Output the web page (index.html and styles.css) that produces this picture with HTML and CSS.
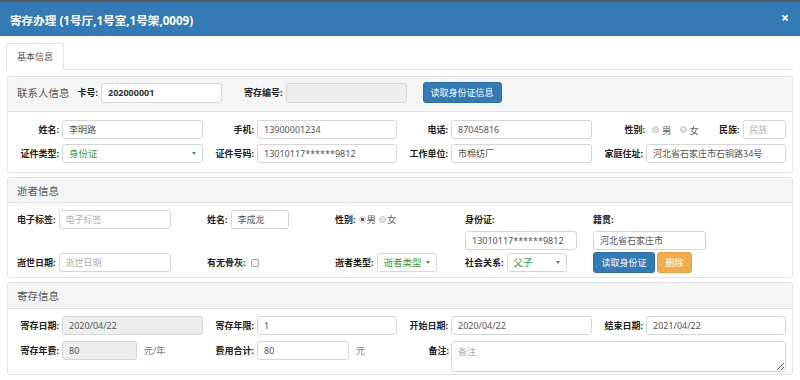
FILE: index.html
```html
<!DOCTYPE html>
<html lang="zh-CN">
<head>
  <meta charset="UTF-8">
  <meta name="viewport" content="width=device-width, initial-scale=1.0">
  <title>寄存办理</title>
  <link rel="stylesheet" href="styles.css">
</head>

<body>

<div class="backdrop"></div>

<div class="modal">
  <div class="modal-header">
    <h1>寄存办理 (1号厅,1号室,1号架,0009)</h1>
    <span class="close">×</span>
  </div>

  <div class="modal-body">

    <div class="tabs">
      <div class="tab">基本信息</div>
    </div>

    <!-- 联系人信息 -->
    <div class="panel panel-contact">
      <div class="panel-heading">
        <span class="panel-title">联系人信息</span>
        <span class="lbl">卡号:</span>
        <input class="ipt ipt-card" value="202000001">
        <span class="lbl lbl-no">寄存编号:</span>
        <input class="ipt ipt-no" disabled>
        <button class="btn btn-primary btn-read">读取身份证信息</button>
      </div>
      <div class="panel-body form-grid">
        <div class="field"><span class="lbl">姓名:</span><input class="ipt" value="李明路"></div>
        <div class="field"><span class="lbl">手机:</span><input class="ipt" value="13900001234"></div>
        <div class="field"><span class="lbl">电话:</span><input class="ipt" value="87045816"></div>
        <div class="field field-sex">
          <span class="lbl">性别:</span>
          <span class="radio"></span><span class="opt">男</span>
          <span class="radio"></span><span class="opt">女</span>
          <span class="lbl lbl-nation">民族:</span>
          <input class="ipt ipt-nation" placeholder="民族">
        </div>

        <div class="field"><span class="lbl">证件类型:</span><div class="select">身份证<i class="caret"></i></div></div>
        <div class="field"><span class="lbl">证件号码:</span><input class="ipt" value="13010117******9812"></div>
        <div class="field"><span class="lbl">工作单位:</span><input class="ipt" value="市棉纺厂"></div>
        <div class="field"><span class="lbl">家庭住址:</span><input class="ipt" value="河北省石家庄市石铜路34号"></div>
      </div>
    </div>

    <!-- 逝者信息 -->
    <div class="panel panel-dead">
      <div class="panel-heading"><span class="panel-title">逝者信息</span></div>
      <div class="panel-body dead-grid">
        <div class="cell"><span class="lbl">电子标签:</span><input class="ipt w112" placeholder="电子标签"></div>
        <div class="cell"><span class="lbl">姓名:</span><input class="ipt w58" value="李成龙"></div>
        <div class="cell">
          <span class="lbl">性别:</span>
          <span class="radio checked"></span><span class="opt">男</span>
          <span class="radio"></span><span class="opt">女</span>
        </div>
        <div class="cell"><span class="lbl">身份证:</span></div>
        <div class="cell"><span class="lbl">籍贯:</span></div>

        <div class="cell"></div>
        <div class="cell"></div>
        <div class="cell"></div>
        <div class="cell"><input class="ipt w112" value="13010117******9812"></div>
        <div class="cell"><input class="ipt w113" value="河北省石家庄市"></div>

        <div class="cell"><span class="lbl">逝世日期:</span><input class="ipt w112" placeholder="逝世日期"></div>
        <div class="cell"><span class="lbl">有无骨灰:</span><span class="check"></span></div>
        <div class="cell"><span class="lbl">逝者类型:</span><div class="select w60">逝者类型<i class="caret"></i></div></div>
        <div class="cell"><span class="lbl">社会关系:</span><div class="select w60">父子<i class="caret"></i></div></div>
        <div class="cell">
          <button class="btn btn-primary btn-id">读取身份证</button>
          <button class="btn btn-warning btn-del">删除</button>
        </div>
      </div>
    </div>

    <!-- 寄存信息 -->
    <div class="panel panel-store">
      <div class="panel-heading"><span class="panel-title">寄存信息</span></div>
      <div class="panel-body form-grid">
        <div class="field"><span class="lbl">寄存日期:</span><input class="ipt" value="2020/04/22" disabled></div>
        <div class="field"><span class="lbl">寄存年限:</span><input class="ipt" value="1"></div>
        <div class="field"><span class="lbl">开始日期:</span><input class="ipt" value="2020/04/22"></div>
        <div class="field"><span class="lbl">结束日期:</span><input class="ipt" value="2021/04/22"></div>

        <div class="field"><span class="lbl">寄存年费:</span><input class="ipt w75" value="80" disabled><span class="unit">元/年</span></div>
        <div class="field"><span class="lbl">费用合计:</span><input class="ipt w92" value="80"><span class="unit">元</span></div>
        <div class="field field-wide"><span class="lbl">备注:</span><textarea class="ipt memo" placeholder="备注"></textarea></div>
      </div>
    </div>

  </div>
</div>

</body>
</html>
```

FILE: styles.css
```css
* {
  box-sizing: border-box;
}
body {
  margin: 0;
  font-family: "Noto Sans", "Noto Sans CJK SC", sans-serif;
  background: #fff;
  color: #222;
}
.backdrop {
  height: 2px;
  background: #5b5b5b;
}
.modal-header {
  height: 34px;
  background: #337ab7;
  color: #fff;
  display: flex;
  align-items: center;
  justify-content: space-between;
  padding: 0 11px 0 10px;
}
.modal-header h1 {
  margin: 0;
  padding-top: 2px;
  font-size: 11.6px;
  font-weight: 700;
}
.close {
  font-size: 14px;
  font-weight: 700;
  line-height: 1;
  margin-bottom: 3px;
}
.modal-body {
  padding: 7px 7px 0 7px;
}
.tabs {
  display: flex;
  height: 27px;
  border-bottom: 1px solid #e3e3e3;
}
.tab {
  height: 27px;
  margin-left: -1px;
  padding: 0 10px;
  border: 1px solid #e3e3e3;
  border-bottom-color: transparent;
  border-radius: 3px 3px 0 0;
  background: #fff;
  font-size: 9px;
  line-height: 25px;
  color: #555;
}
.panel {
  margin-top: 4px;
  border: 1px solid #e3e3e3;
  border-radius: 3px;
}
.panel-contact {
  margin-top: 6px;
}
.panel-heading {
  display: flex;
  align-items: center;
  padding-left: 9px;
  background: #f5f5f5;
  border-bottom: 1px solid #e3e3e3;
  height: 25px;
}
.panel-contact .panel-heading {
  height: 35px;
  padding-bottom: 3px;
}
.panel-store .panel-heading {
  height: 26px;
}
.panel-title {
  font-size: 10.5px;
  color: #555;
  margin-right: 8px;
}
.lbl {
  font-size: 9px;
  font-weight: 700;
  color: #222;
  white-space: nowrap;
  margin-right: 3px;
}
.lbl-no {
  margin-left: 22px;
}
.ipt {
  height: 19px;
  padding: 0 6px;
  border: 1px solid #d6d6d6;
  border-radius: 3px;
  background: #fff;
  font-family: inherit;
  font-size: 9px;
  color: #555;
  outline: none;
}
.ipt::placeholder {
  color: #b0b0b0;
}
.ipt:disabled {
  background: #eee;
}
.ipt-card {
  width: 121px;
  height: 20px;
  font-weight: 700;
  color: #333;
}
.ipt-no {
  width: 121px;
  height: 20px;
}
.btn {
  height: 21px;
  padding: 0;
  border: 1px solid;
  border-radius: 3px;
  font-family: inherit;
  font-size: 9px;
  color: #fff;
}
.btn-primary {
  background: #337ab7;
  border-color: #2e6da4;
}
.btn-warning {
  background: #f0ad4e;
  border-color: #eea236;
}
.btn-read {
  width: 79px;
  margin-left: 16px;
}
.btn-id {
  width: 62px;
}
.btn-del {
  width: 35px;
  margin-left: 2px;
}

/* 联系人 / 寄存 表单 */
.form-grid {
  display: grid;
  grid-template-columns: 195px 194px 195px minmax(0, 1fr);
  align-items: start;
  row-gap: 5px;
  padding: 8px 6px 9px 0;
}
.panel-store .form-grid {
  row-gap: 6px;
  padding: 7px 6px 2px 0;
}
.field {
  display: flex;
  align-items: center;
  height: 19px;
  min-width: 0;
}
.field .lbl {
  width: 54px;
  flex: none;
  margin-right: 0;
  padding-right: 3px;
  text-align: right;
}
.field .ipt {
  flex: 1;
  width: 0;
  min-width: 0;
}
.field .select {
  flex: 1;
}
.field-sex .lbl {
  width: 56px;
}
.field-sex .radio {
  margin-left: 4px;
}
.field-sex .opt {
  margin-left: 3px;
  margin-right: 4px;
}
.field-sex .lbl-nation {
  width: auto;
  margin-left: 16px;
}
.field-sex .ipt-nation {
  flex: none;
  width: 43px;
}
.field .w75 {
  flex: none;
  width: 75px;
}
.field .w92 {
  flex: none;
  width: 92px;
}
.unit {
  margin-left: 7px;
  font-size: 9px;
  color: #777;
}
.field-wide {
  grid-column: span 2;
  height: 31px;
  align-items: flex-start;
}
.field-wide .lbl {
  margin-top: 3px;
  padding-right: 2px;
}
.memo {
  height: 31px;
  padding-top: 3px;
  resize: vertical;
}

.radio {
  display: inline-block;
  width: 7px;
  height: 7px;
  border: 1px solid #c4c4c4;
  border-radius: 50%;
  background: #e6e6e6;
  flex: none;
}
.radio.checked {
  background: radial-gradient(circle, #555 0 1.6px, #eee 2px);
}
.opt {
  font-size: 9.5px;
  color: #666;
}
.check {
  display: inline-block;
  width: 8px;
  height: 8px;
  margin-left: 2px;
  border: 1px solid #aaa;
  border-radius: 1px;
  background: #f2f2f2;
}
.select {
  position: relative;
  height: 19px;
  padding: 0 6px;
  border: 1px solid #d6d6d6;
  border-radius: 3px;
  background: #fff;
  font-size: 9.5px;
  line-height: 17px;
  color: #3c9a3c;
}
.caret {
  position: absolute;
  right: 6px;
  top: 7px;
  border-left: 2px solid transparent;
  border-right: 2px solid transparent;
  border-top: 3px solid #3c9a3c;
}

/* 逝者信息 */
.dead-grid {
  display: grid;
  grid-template-columns: 190px 128px 130px 128px 1fr;
  grid-template-rows: 20px 19px 21px;
  row-gap: 2px;
  padding: 6px 0 4px 9px;
}
.cell {
  display: flex;
  align-items: center;
}
.cell .radio + .opt {
  margin-left: 1px;
  margin-right: 3px;
}
.w112 {
  width: 112px;
}
.w113 {
  width: 113px;
}
.w58 {
  width: 58px;
}
.w60 {
  width: 60px;
}
```
